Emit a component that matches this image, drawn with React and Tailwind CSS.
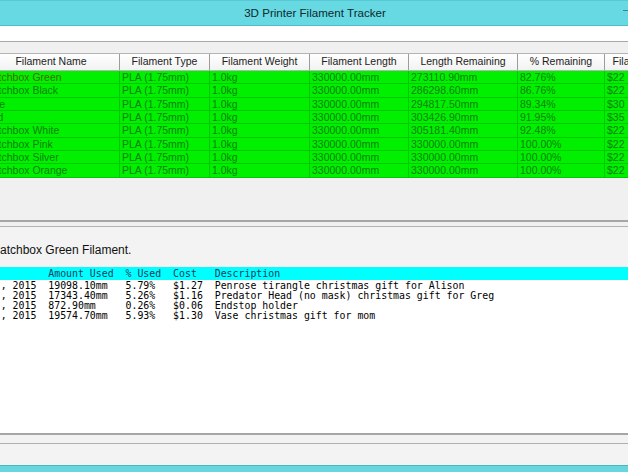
import React from 'react';

const filaments = [
    { name: 'Matchbox Green', remaining: '273110.90mm', pct: '82.76%', cost: '$22' },
    { name: 'Matchbox Black', remaining: '286298.60mm', pct: '86.76%', cost: '$22' },
    { name: 'Blue', remaining: '294817.50mm', pct: '89.34%', cost: '$30' },
    { name: 'Red', remaining: '303426.90mm', pct: '91.95%', cost: '$35' },
    { name: 'Matchbox White', remaining: '305181.40mm', pct: '92.48%', cost: '$22' },
    { name: 'Matchbox Pink', remaining: '330000.00mm', pct: '100.00%', cost: '$22' },
    { name: 'Matchbox Silver', remaining: '330000.00mm', pct: '100.00%', cost: '$22' },
    { name: 'Matchbox Orange', remaining: '330000.00mm', pct: '100.00%', cost: '$22' },
];

const columns = ['Filament Name', 'Filament Type', 'Filament Weight', 'Filament Length', 'Length Remaining', '% Remaining', 'Filament Cost'];

const usage = [
    [', 2015', '19098.10mm', '5.79%', '$1.27', 'Penrose tirangle christmas gift for Alison'],
    [', 2015', '17343.40mm', '5.26%', '$1.16', 'Predator Head (no mask) christmas gift for Greg'],
    [', 2015', '872.90mm', '0.26%', '$0.06', 'Endstop holder'],
    [', 2015', '19574.70mm', '5.93%', '$1.30', 'Vase christmas gift for mom'],
];

// fixed-width log line, columns at 0 / 8 / 21 / 29 / 36
const logLine = (c) => c[0].padEnd(8) + c[1].padEnd(13) + c[2].padEnd(8) + c[3].padEnd(7) + c[4];

const grid = 'grid grid-cols-[137px_90px_100px_99px_109px_87px_81px] w-[703px]';

export default function App() {
    return (
        <div className="w-[628px] h-[472px] overflow-hidden bg-[#f0f0f0] flex flex-col font-['Liberation_Sans',Arial,sans-serif] text-[#1a1a1a]">
            {/* ── Title bar ── */}
            <div className="h-[26px] shrink-0 grid grid-cols-[1fr_auto_1fr] items-center bg-[#66d9e3] border-t border-[#58c9d3] border-b border-b-[#4fbcc7]">
                <div />
                <span className="text-[11.6px] text-[#10282c] pl-[2px]">3D Printer Filament Tracker</span>
                <div className="self-start">
                    <div className="ml-auto mt-[9px] w-[5px] h-[1px] bg-[#4a7f88]" />
                </div>
            </div>

            {/* ── Toolbar strip ── */}
            <div className="h-[16px] shrink-0 bg-white border-b border-[#a9a9a9]" />

            {/* ── Filament table ── */}
            <div className="shrink-0 pt-[11px] ml-[-17px]">
                <div className={`${grid} h-[18px] bg-gradient-to-b from-white to-[#f2f2f2] border-y border-[#b4b4b4]`}>
                    {columns.map((c) => (
                        <div key={c} className="flex items-center justify-center border-r border-[#9c9c9c] text-[10.5px] text-[#222] whitespace-nowrap overflow-hidden">
                            {c}
                        </div>
                    ))}
                </div>
                {filaments.map((f, i) => (
                    <div key={f.name} className={`${grid} h-[13.33px] bg-[#00f000] border-b border-[#00c800] text-[10.5px] leading-[12px] text-[#0c7f0c]`}>
                        <div className={`pl-[1px] border-r border-[#00c800] whitespace-nowrap overflow-hidden ${i === 0 ? 'text-[#4a6a00]' : ''}`}>{f.name}</div>
                        <div className="pl-[2px] border-r border-[#00c800] whitespace-nowrap">PLA (1.75mm)</div>
                        <div className="pl-[2px] border-r border-[#00c800] whitespace-nowrap">1.0kg</div>
                        <div className="pl-[2px] border-r border-[#00c800] whitespace-nowrap">330000.00mm</div>
                        <div className="pl-[2px] border-r border-[#00c800] whitespace-nowrap">{f.remaining}</div>
                        <div className="pl-[2px] border-r border-[#00c800] whitespace-nowrap">{f.pct}</div>
                        <div className="pl-[2px] whitespace-nowrap">{f.cost}</div>
                    </div>
                ))}
            </div>

            {/* ── Empty space under the table ── */}
            <div className="h-[42px] shrink-0" />
            <div className="h-[7px] shrink-0 border-t-2 border-[#a6a6a6] border-b border-b-[#b3b3b3] bg-[#f0f0f0]" />

            {/* ── Selected filament label ── */}
            <div className="h-[40px] shrink-0 bg-[#f3f3f3] flex items-center pt-[7px] overflow-hidden">
                <span className="ml-[-10px] text-[12px] text-[#111] whitespace-nowrap">Matchbox Green Filament.</span>
            </div>

            {/* ── Usage log ── */}
            <div className="h-[13px] shrink-0 bg-[#00ffff] font-['DejaVu_Sans_Mono',monospace] text-[9.9px] leading-[13px] text-[#16395c] whitespace-pre pl-[0.7px]">
                {logLine(['', 'Amount Used', '% Used', 'Cost', 'Description'])}
            </div>
            <div className="h-[153px] shrink-0 bg-white pt-[1px] font-['DejaVu_Sans_Mono',monospace] text-[9.9px] leading-[10px] text-black whitespace-pre pl-[0.7px]">
                {usage.map((u, i) => (
                    <div key={i}>{logLine(u)}</div>
                ))}
            </div>

            {/* ── Bottom bars ── */}
            <div className="h-[11px] shrink-0 border-t-2 border-[#a6a6a6] border-b border-b-[#b0b0b0] bg-[#f2f2f2]" />
            <div className="flex-1 bg-[#f3f3f3]" />
            <div className="h-[7px] shrink-0 bg-[#69d5df] border-t border-[#4eb6c1]" />
        </div>
    );
}
